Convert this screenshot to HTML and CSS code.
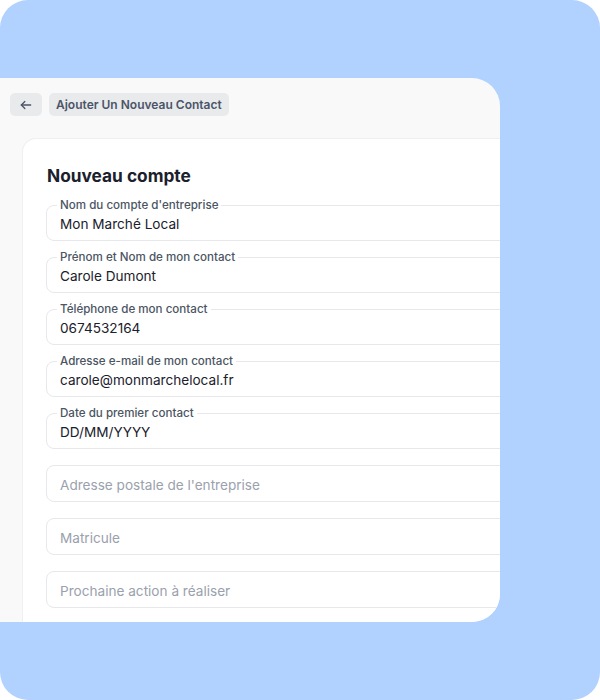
FILE: index.html
```html
<!DOCTYPE html>
<html lang="fr">
<head>
<meta charset="utf-8">
<title>Nouveau compte</title>
<link rel="stylesheet" href="styles.css">
</head>
<body>
<div class="frame">
  <div class="panel">
    <div class="topbar">
      <button class="back" aria-label="Retour">
        <svg width="14" height="14" viewBox="0 0 24 24" fill="none" stroke="#4a5568" stroke-width="2.2" stroke-linecap="round" stroke-linejoin="round"><path d="M20 12H4"/><path d="M10 6l-6 6 6 6"/></svg>
      </button>
      <div class="crumb">Ajouter Un Nouveau Contact</div>
    </div>
    <div class="card">
      <h1 class="title">Nouveau compte</h1>
      <div class="fields">
        <div class="field"><span class="label">Nom du compte d'entreprise</span><span class="value">Mon Marché Local</span></div>
        <div class="field"><span class="label">Prénom et Nom de mon contact</span><span class="value">Carole Dumont</span></div>
        <div class="field"><span class="label">Téléphone de mon contact</span><span class="value">0674532164</span></div>
        <div class="field"><span class="label">Adresse e-mail de mon contact</span><span class="value">carole@monmarchelocal.fr</span></div>
        <div class="field"><span class="label">Date du premier contact</span><span class="value">DD/MM/YYYY</span></div>
        <div class="field field-empty"><span class="placeholder">Adresse postale de l'entreprise</span></div>
        <div class="field field-empty"><span class="placeholder">Matricule</span></div>
        <div class="field field-empty"><span class="placeholder">Prochaine action à réaliser</span></div>
      </div>
    </div>
  </div>
</div>
</body>
</html>
```
FILE: styles.css
```css
* { box-sizing: border-box; }
html, body { margin: 0; padding: 0; background: #ffffff; }
body {
  font-family: Inter, "Noto Sans", "Liberation Sans", sans-serif;
  width: 600px;
  height: 700px;
  overflow: hidden;
}
.frame {
  width: 600px;
  height: 700px;
  background: #b1d1ff;
  border-radius: 28px;
  padding-top: 78px;
  overflow: hidden;
}
.panel {
  width: 500px;
  height: 544px;
  background: #f9f9f9;
  border-radius: 0 28px 28px 0;
  overflow: hidden;
  display: flex;
  flex-direction: column;
}
.topbar {
  height: 60px;
  flex: none;
  display: flex;
  align-items: flex-start;
  gap: 7px;
  padding: 15px 0 0 10px;
}
.back {
  width: 32px;
  height: 23px;
  border: 0;
  padding: 0;
  border-radius: 5px;
  background: #e9eaec;
  display: flex;
  align-items: center;
  justify-content: center;
}
.crumb {
  height: 23px;
  padding: 0 7px;
  border-radius: 5px;
  background: #e9eaec;
  color: #4a5568;
  font-size: 12px;
  font-weight: 600;
  line-height: 23px;
  white-space: nowrap;
}
.card {
  flex: 1;
  margin-left: 22px;
  width: 600px;
  background: #ffffff;
  border: 1px solid #efefef;
  border-right: 0;
  border-bottom: 0;
  border-radius: 14px 0 0 0;
  padding: 26px 0 0 23px;
}
.title {
  margin: 0;
  padding-left: 1px;
  font-size: 17.3px;
  line-height: 22px;
  font-weight: 700;
  color: #1a202c;
}
.fields {
  margin-top: 18px;
  display: flex;
  flex-direction: column;
  gap: 16px;
}
.field {
  position: relative;
  height: 36px;
  border: 1px solid #e6e8eb;
  border-radius: 8px;
  display: flex;
  align-items: center;
  padding: 1px 0 0 13px;
}
.field-empty {
  height: 37px;
  padding-top: 3px;
}
.label {
  position: absolute;
  left: 10px;
  top: -8px;
  padding: 0 3px;
  background: #ffffff;
  color: #4b5563;
  font-size: 11.6px;
  line-height: 14px;
  font-weight: 500;
  white-space: nowrap;
}
.value {
  color: #1a202c;
  font-size: 13.6px;
  line-height: 18px;
  white-space: nowrap;
}
.placeholder {
  color: #9aa1ad;
  font-size: 13.6px;
  line-height: 18px;
  white-space: nowrap;
}
```
